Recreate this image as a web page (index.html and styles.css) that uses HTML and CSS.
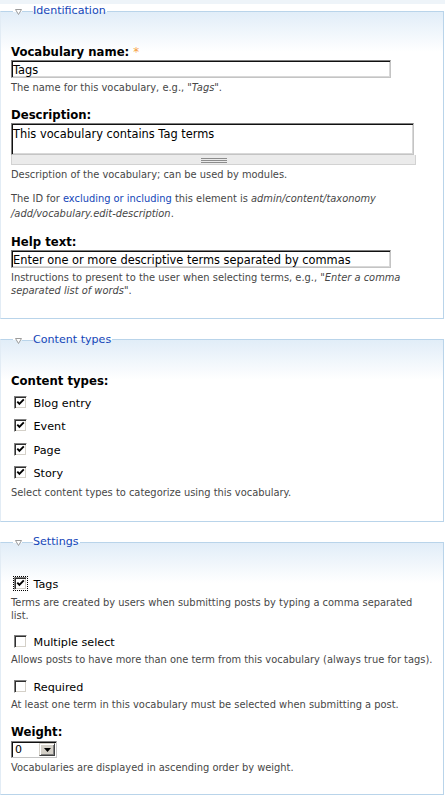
FILE: index.html
```html
<!DOCTYPE html>
<html>
<head>
<meta charset="utf-8">
<title>Vocabulary</title>
<link rel="stylesheet" href="styles.css">
</head>
<body>
<div class="topstrip"></div>

<fieldset class="fs">
  <legend class="lg"><span class="tri"><svg width="7" height="6" viewBox="0 0 7 6"><path d="M0.5 0.5H6.5L3.5 5.5Z" fill="#fff" stroke="#9c9c9c"/></svg></span><span class="lgline"></span><span class="lgtext">Identification</span></legend>
  <div class="item">
    <label class="lbl">Vocabulary name: <span class="req">*</span></label>
    <input class="text" type="text" value="Tags">
    <div class="desc">The name for this vocabulary, e.g., "<em>Tags</em>".</div>
  </div>
  <div class="item">
    <label class="lbl">Description:</label>
    <div class="tawrap">
      <textarea class="ta">This vocabulary contains Tag terms</textarea>
      <div class="grip"><span class="griplines"></span></div>
    </div>
    <div class="desc">Description of the vocabulary; can be used by modules.</div>
    <p class="idp">The ID for <a class="lnk" href="#">excluding or including</a> this element is <em>admin/content/taxonomy</em><wbr><em>/add/vocabulary.edit-description</em>.</p>
  </div>
  <div class="item">
    <label class="lbl">Help text:</label>
    <input class="text" type="text" value="Enter one or more descriptive terms separated by commas">
    <div class="desc">Instructions to present to the user when selecting terms, e.g., <em>"Enter a comma</em> <em>separated list of words"</em>.</div>
  </div>
</fieldset>

<fieldset class="fs">
  <legend class="lg"><span class="tri"><svg width="7" height="6" viewBox="0 0 7 6"><path d="M0.5 0.5H6.5L3.5 5.5Z" fill="#fff" stroke="#9c9c9c"/></svg></span><span class="lgline"></span><span class="lgtext">Content types</span></legend>
  <div class="item">
    <label class="lbl">Content types:</label>
    <div class="cbs">
      <div class="cbrow"><span class="cb"><svg width="9" height="9" viewBox="0 0 9 9"><path d="M1.3 3.6L3.4 5.8L7.8 1.4" fill="none" stroke="#000" stroke-width="1.9"/></svg></span>Blog entry</div>
      <div class="cbrow"><span class="cb"><svg width="9" height="9" viewBox="0 0 9 9"><path d="M1.3 3.6L3.4 5.8L7.8 1.4" fill="none" stroke="#000" stroke-width="1.9"/></svg></span>Event</div>
      <div class="cbrow"><span class="cb"><svg width="9" height="9" viewBox="0 0 9 9"><path d="M1.3 3.6L3.4 5.8L7.8 1.4" fill="none" stroke="#000" stroke-width="1.9"/></svg></span>Page</div>
      <div class="cbrow"><span class="cb"><svg width="9" height="9" viewBox="0 0 9 9"><path d="M1.3 3.6L3.4 5.8L7.8 1.4" fill="none" stroke="#000" stroke-width="1.9"/></svg></span>Story</div>
    </div>
    <div class="desc desc-after-cbs">Select content types to categorize using this vocabulary.</div>
  </div>
</fieldset>

<fieldset class="fs fs-settings">
  <legend class="lg"><span class="tri"><svg width="7" height="6" viewBox="0 0 7 6"><path d="M0.5 0.5H6.5L3.5 5.5Z" fill="#fff" stroke="#9c9c9c"/></svg></span><span class="lgline"></span><span class="lgtext">Settings</span></legend>
  <div class="item">
    <div class="cbrow"><span class="cb focus"><svg width="9" height="9" viewBox="0 0 9 9"><path d="M1.3 3.6L3.4 5.8L7.8 1.4" fill="none" stroke="#000" stroke-width="1.9"/></svg></span>Tags</div>
    <div class="desc desc-narrow">Terms are created by users when submitting posts by typing a comma separated list.</div>
  </div>
  <div class="item">
    <div class="cbrow"><span class="cb"></span>Multiple select</div>
    <div class="desc">Allows posts to have more than one term from this vocabulary (always true for tags).</div>
  </div>
  <div class="item">
    <div class="cbrow"><span class="cb"></span>Required</div>
    <div class="desc">At least one term in this vocabulary must be selected when submitting a post.</div>
  </div>
  <div class="item">
    <label class="lbl">Weight:</label>
    <div class="select"><span class="selval">0</span><span class="selbtn"><svg width="7" height="4" viewBox="0 0 7 4"><path d="M0 0H7L3.5 4Z" fill="#000"/></svg></span></div>
    <div class="desc">Vocabularies are displayed in ascending order by weight.</div>
  </div>
</fieldset>
</body>
</html>
```

FILE: styles.css
```css
* {
  box-sizing: border-box;
}

body {
  margin: 0;
  background: #fff;
  font-family: "DejaVu Sans", Verdana, sans-serif;
  color: #000;
}

.topstrip {
  height: 4px;
  background: #eef4f9;
}

.fs {
  margin: 0 1px 13.5px 0;
  padding: 26px 7px 21px 10px;
  border: 1px solid #b9d4ea;
  border-left-color: #e2ecf5;
  background: linear-gradient(#e1edf8, #ffffff 40px);
  min-width: 0;
}

.fs-settings {
  padding-top: 28px;
  padding-bottom: 19.5px;
}

.fs-settings .item + .item {
  margin-top: 13px;
}

.lg {
  margin-left: 2px;
  padding: 0;
  height: 14px;
  line-height: 14px;
  font-size: 11.1px;
  white-space: nowrap;
  color: #1446b8;
}

.tri {
  display: inline-block;
  vertical-align: top;
  width: 7px;
  height: 6px;
  margin: 5px 0 0 2px;
}

.tri svg {
  display: block;
}

.lgline {
  display: inline-block;
  vertical-align: top;
  width: 11px;
  height: 1px;
  margin-top: 7px;
  background: #b9d4ea;
}

.lgtext {
  display: inline-block;
  vertical-align: top;
  padding-right: 1px;
}

.item + .item {
  margin-top: 13.5px;
}

.lbl {
  display: block;
  font-weight: bold;
  font-size: 11.7px;
  line-height: 16px;
}

.req {
  color: #f5a040;
  font-weight: normal;
}

.text {
  display: block;
  margin: 0;
  width: 380px;
  height: 18px;
  padding: 2px 1px 0;
  border: 1px solid;
  border-color: #7f7f7f #c4c4c4 #c4c4c4 #7f7f7f;
  box-shadow: inset 1px 1px 0 #111, inset -1px -1px 0 #d8d8d8;
  background: #fff;
  font-family: "DejaVu Sans", Verdana, sans-serif;
  font-size: 11.4px;
  color: #000;
  outline: none;
}

.tawrap {
  width: 405px;
}

.ta {
  display: block;
  margin: 0;
  width: 403px;
  height: 32px;
  padding: 3px 1px 0;
  border: 1px solid;
  border-color: #7f7f7f #c4c4c4 #c4c4c4 #7f7f7f;
  box-shadow: inset 1px 1px 0 #111, inset -1px -1px 0 #d8d8d8;
  background: #fff;
  font-family: "DejaVu Sans", Verdana, sans-serif;
  font-size: 11.4px;
  line-height: 14px;
  color: #000;
  resize: none;
  overflow: hidden;
  outline: none;
}

.grip {
  display: flex;
  justify-content: center;
  height: 10px;
  padding-top: 3px;
  background: #ebebeb;
  border: 1px solid #d2d2d2;
  border-top: 0;
}

.griplines {
  width: 26px;
  height: 5px;
  background: repeating-linear-gradient(to bottom, #8c8c8c 0 1px, transparent 1px 2px);
}

.desc {
  margin-top: 2.5px;
  font-size: 9.9px;
  line-height: 13.2px;
  color: #474747;
}

.desc-after-cbs {
  margin-top: 4px;
}

.desc-narrow {
  max-width: 410px;
}

.idp {
  margin: 10px 0 0;
  font-size: 9.9px;
  line-height: 15px;
  color: #474747;
}

.lnk {
  color: #1446b8;
  text-decoration: none;
}

.cbs {
  margin-top: 7px;
}

.cbrow {
  display: flex;
  align-items: flex-start;
  height: 16px;
  font-size: 11.2px;
  line-height: 16px;
}

.cbrow + .cbrow {
  margin-top: 7.5px;
}

.cb {
  flex: none;
  display: flex;
  align-items: center;
  justify-content: center;
  width: 13px;
  height: 13px;
  margin: 0 6.5px 0 3px;
  border: 1px solid;
  border-color: #808080 #ffffff #ffffff #808080;
  box-shadow: inset 1px 1px 0 #303030, inset -1px -1px 0 #d4d0c8;
  background: #fff;
}

.cb svg {
  display: block;
}

.cb.focus {
  outline: 1px dotted #000;
  outline-offset: 0;
}

.select {
  display: flex;
  margin-top: 1px;
  width: 46px;
  height: 17px;
  padding: 1px;
  border: 1px solid;
  border-color: #7f7f7f #c4c4c4 #c4c4c4 #7f7f7f;
  box-shadow: inset 1px 1px 0 #111;
  background: #fff;
}

.selval {
  flex: 1;
  padding-left: 2px;
  font-size: 11px;
  line-height: 13px;
}

.selbtn {
  flex: none;
  display: flex;
  align-items: center;
  justify-content: center;
  width: 16px;
  height: 13px;
  background: #d4d0c8;
  border: 1px solid;
  border-color: #d4d0c8 #404040 #404040 #d4d0c8;
  box-shadow: inset 1px 1px 0 #fff, inset -1px -1px 0 #808080;
}

.selbtn svg {
  display: block;
}
```
